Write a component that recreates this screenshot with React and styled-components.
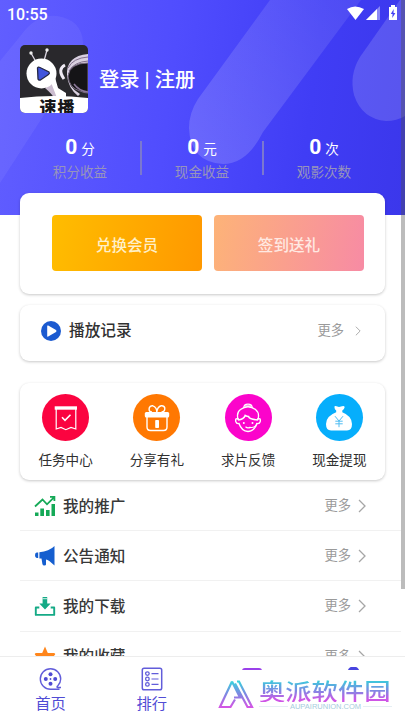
import React from 'react';
import styled, { createGlobalStyle } from 'styled-components';

const stats = [
  { value: '0', unit: '分', label: '积分收益' },
  { value: '0', unit: '元', label: '现金收益' },
  { value: '0', unit: '次', label: '观影次数' },
];

const shortcuts = [
  { label: '任务中心', color: '#fb0440', icon: <TaskIcon /> },
  { label: '分享有礼', color: '#ff7802', icon: <GiftIcon /> },
  { label: '求片反馈', color: '#fb04cb', icon: <FaceIcon /> },
  { label: '现金提现', color: '#06aefc', icon: <PurseIcon /> },
];

const menuItems = [
  { label: '我的推广', icon: <ChartIcon /> },
  { label: '公告通知', icon: <HornIcon /> },
  { label: '我的下载', icon: <DownloadIcon /> },
  { label: '我的收藏', icon: <StarIcon /> },
];

export default function App() {
  return (
    <Screen>
      <GlobalStyle />
      <Content>
        <Header>
          <HeaderPattern />
          <StatusBar>
            <span>10:55</span>
            <StatusIcons />
          </StatusBar>
          <Profile>
            <Avatar>
              <AvatarArt />
              <AvatarName>速播</AvatarName>
            </Avatar>
            <Login>登录 | 注册</Login>
          </Profile>
          <Stats>
            {stats.map(stat => (
              <Stat key={stat.label}>
                <StatValue>
                  <strong>{stat.value}</strong>
                  {stat.unit}
                </StatValue>
                <StatLabel>{stat.label}</StatLabel>
              </Stat>
            ))}
          </Stats>
        </Header>

        <ActionCard>
          <ActionButton $from="#ffbd00" $to="#ff9800" $color="#fff0c8">
            兑换会员
          </ActionButton>
          <ActionButton $from="#fdb378" $to="#f78ba4" $color="#ffe9e2">
            签到送礼
          </ActionButton>
        </ActionCard>

        <HistoryCard>
          <PlayIcon />
          <HistoryTitle>播放记录</HistoryTitle>
          <More $gap="11px">
            更多
            <Chevron width="6" height="10" />
          </More>
        </HistoryCard>

        <ShortcutCard>
          {shortcuts.map(item => (
            <Shortcut key={item.label}>
              <Circle $color={item.color}>{item.icon}</Circle>
              {item.label}
            </Shortcut>
          ))}
        </ShortcutCard>

        <Menu>
          {menuItems.map(item => (
            <MenuRow key={item.label}>
              <MenuIcon>{item.icon}</MenuIcon>
              <MenuTitle>{item.label}</MenuTitle>
              <More $gap="7px">
                更多
                <Chevron width="8" height="14" />
              </More>
            </MenuRow>
          ))}
        </Menu>
      </Content>

      <TabBar>
        <Tab>
          <ReelIcon />
          首页
        </Tab>
        <Tab>
          <RankIcon />
          排行
        </Tab>
        <Tab>
          <svg width="26" height="24" viewBox="0 0 26 24">
            <rect x="2" y="1" width="20" height="20" rx="3" fill="#9a40ea" />
          </svg>
        </Tab>
        <Tab>
          <svg width="26" height="24" viewBox="0 0 26 24">
            <circle cx="12.5" cy="6" r="6.5" fill="#4844df" />
          </svg>
        </Tab>
      </TabBar>

      <Watermark>
        <WatermarkLogo />
        <WatermarkText>
          <WatermarkName>奥派软件园</WatermarkName>
          <WatermarkSite>AUPAIRUNION.COM</WatermarkSite>
        </WatermarkText>
      </Watermark>
      <ScrollThumb />
    </Screen>
  );
}

function HeaderPattern() {
  return (
    <Pattern width="405" height="215" viewBox="0 0 405 215">
      <defs>
        <linearGradient id="band" x1="1" y1="0" x2="0" y2="1">
          <stop offset="0" stopColor="#fff" stopOpacity="0.08" />
          <stop offset="1" stopColor="#fff" stopOpacity="0.17" />
        </linearGradient>
      </defs>
      <path
        d="M270 0H361L263 132Q247 164 223 164Q190 162 189 128Q189 113 198 99Z"
        fill="url(#band)"
      />
      <path
        d="M405 0H400L360 57Q349 75 354 95Q362 119 386 121Q397 121 405 116Z"
        fill="#fff"
        fillOpacity="0.15"
      />
      <path
        d="M0 61L22 34Q37 14 57 16Q82 20 83 43Q82 57 73 70L0 183Z"
        fill="#fff"
        fillOpacity="0.06"
      />
    </Pattern>
  );
}

function StatusIcons() {
  return (
    <svg width="54" height="16" viewBox="0 0 54 16" fill="#fff">
      <path d="M1 4Q9-1 18 4L9.5 15Z" />
      <path d="M20 15L34 1V15Z" fillOpacity="0.4" />
      <path d="M20 15L31 4V15Z" />
      <path d="M45 0H49V2H51V15H43V2H45Z" />
      <path d="M47.7 4L44.8 9H46.6L46.2 13L49.4 8H47.5Z" fill="#4441f5" />
    </svg>
  );
}

function AvatarArt() {
  return (
    <svg width="68" height="53" viewBox="0 0 68 53">
      <path d="M25 43Q32 49 34 53H43Q36 42 35 34Z" fill="#cbbdd0" />
      <path
        d="M47 30Q46 11 68 9V19Q50 18 48 31Q48 42 60 49L58 51Q48 43 47 30Z"
        fill="#d9d0e0"
      />
      <path d="M48 23Q53 13 68 12M49 26Q54 17 68 16" stroke="#81708b" fill="none" />
      <path
        d="M68 18Q50 18 48 31Q49 43 60 46Q64 48 68 48Z"
        fill="#151417"
        stroke="#77697f"
        strokeWidth="1"
      />
      <path d="M54 39Q59 46 68 47" stroke="#8b7898" strokeWidth="1.5" fill="none" />
      <path d="M45 20Q37 24 44 34" stroke="#efeaf3" strokeWidth="3" fill="none" />
      <path d="M11 8L16 17M27 5L24 16" stroke="#d9d3df" strokeWidth="1.3" />
      <circle cx="11" cy="8" r="1.7" fill="#eee" />
      <circle cx="27" cy="5" r="1.7" fill="#eee" />
      <circle cx="21.5" cy="28.5" r="15" fill="#fff" />
      <path
        d="M17.5 23Q18 21.5 20 22.5L29 27Q30 28.5 28.5 29.5L20.5 35Q18.5 35.5 18 34Z"
        fill="#4054dd"
        stroke="#252845"
        strokeWidth="1.3"
      />
      <path d="M32 40V34Q35 30 36 36L38 43L46 48V53H37Z" fill="#fff" />
      <path d="M0 53Q34 49 68 53Z" fill="#fff" />
    </svg>
  );
}

function PlayIcon() {
  return (
    <svg width="20" height="20" viewBox="0 0 20 20">
      <circle cx="10" cy="10" r="10" fill="#1b5ad0" />
      <path
        d="M6.2 5Q6.2 4 7.2 4.6L15 9Q16 10 15 11L7.2 15.4Q6.2 16 6.2 15Z"
        fill="#fff"
      />
    </svg>
  );
}

function Chevron({ width, height }) {
  return (
    <svg width={width} height={height} viewBox="0 0 8 14" fill="none">
      <path d="M1 1L7 7L1 13" stroke="#a6a6a6" strokeWidth="1.3" />
    </svg>
  );
}

function TaskIcon() {
  return (
    <svg width="26" height="26" viewBox="0 0 26 26" fill="none" stroke="#fff">
      <path d="M1.7 3H24" strokeWidth="3.4" />
      <path d="M3.2 4V24L8 22.5L12.8 24.7L18 22.5L22.8 24V4" strokeWidth="1.2" />
      <path d="M9 12.3L12 15.3L17.5 9.8" strokeWidth="1.6" />
    </svg>
  );
}

function GiftIcon() {
  return (
    <svg width="28" height="28" viewBox="0 0 28 28" fill="none" stroke="#fff">
      <path
        d="M9 8Q5.5 8 6.2 4Q7 1.4 9.8 1.8Q13.8 3 13.8 8Q14.5 2.8 18.2 1.8Q21.2 1.5 21.8 4Q22 8 18.5 8"
        strokeWidth="1.4"
      />
      <rect x="1.8" y="8" width="24.4" height="5.5" rx="1.5" fill="#fff" stroke="none" />
      <path d="M4 13V23Q4 26.5 7.5 26.5H20.5Q24 26.5 24 23V13" strokeWidth="1.4" />
      <rect x="12.2" y="16" width="3.8" height="8" rx="0.8" fill="#fff" stroke="none" />
    </svg>
  );
}

function FaceIcon() {
  return (
    <svg width="28" height="30" viewBox="0 0 28 30" fill="none" stroke="#fff">
      <path
        d="M4.2 17Q2 9.5 6.5 6.5Q14 1 21.5 6.5Q26 10 23.8 17"
        strokeWidth="1.3"
      />
      <path d="M9.8 4.8Q9.8 1.2 14 1.2Q18.2 1.2 18.2 4.8" strokeWidth="1.3" />
      <path d="M11 3H17" strokeWidth="1.2" />
      <path
        d="M4 17Q9.7 16.5 11.2 12.5Q13 13.5 14.5 13.5Q15.5 16.5 24 17"
        strokeWidth="1.6"
      />
      <path
        d="M4.8 16Q1 14.5 1.8 18.5Q2.4 21 5 20.5Q7.5 28 14 28.5Q20.5 28 23 20.5Q25.6 21 26.2 18.5Q27 14.5 23.2 16"
        strokeWidth="1.4"
      />
      <path d="M23 20Q22 25 15 24.7" strokeWidth="1.2" />
      <circle cx="9.8" cy="20" r="1" fill="#fff" stroke="none" />
      <circle cx="18.5" cy="20" r="1" fill="#fff" stroke="none" />
      <path d="M11.5 23.8Q14 26 16.5 24" strokeWidth="1.2" />
    </svg>
  );
}

function PurseIcon() {
  return (
    <svg width="28" height="28" viewBox="0 0 28 28">
      <path
        d="M9.5 3.4Q9 1.5 11.5 2.2L14 3L17 2.2Q20 1.2 19.6 3.6Q19 5.8 17.3 6.5V8.2Q27 12 27 20Q27 26.5 22 26.5H6Q1 26.5 1 20Q1 12 11.2 8.2V6.5Q9.5 5.5 9.5 3.4Z"
        fill="#fff"
      />
      <path
        d="M10 12.2L14 17L18 12.2M10.3 17.2H17.7M10.3 19.8H17.7M14 17V23.2"
        fill="none"
        stroke="#50bdf2"
        strokeWidth="1"
      />
    </svg>
  );
}

function ChartIcon() {
  return (
    <svg width="22" height="22" viewBox="0 0 22 22" fill="#15a957">
      <path d="M1 17.5H4.5V21H1ZM6.3 13.5H10V21H6.3ZM12 15H15.6V21H12ZM17.5 9H21V21H17.5Z" />
      <path
        d="M1 11.5L8.5 4.5L13 9.3L19.5 2.8M16 1.8H20.4V6"
        fill="none"
        stroke="#15a957"
        strokeWidth="1.8"
      />
    </svg>
  );
}

function HornIcon() {
  return (
    <svg width="22" height="22" viewBox="0 0 22 22" fill="#155ecf">
      <path d="M4.2 7.6H2.7Q1 7.6 1 10.2Q1 12.9 2.7 12.9H4.2ZM5.4 7.2Q15 6.6 20.5 1V20.5Q15 15 12 14.4V19.5Q12 20.6 10.4 20.6Q8.6 20.6 8.4 19L7.5 13.5H5.4Z" />
    </svg>
  );
}

function DownloadIcon() {
  return (
    <svg width="22" height="22" viewBox="0 0 22 22" fill="#15aa86">
      <path d="M8.6 2H13.2V8.5H16.7L11 14.5L5.3 8.5H8.6Z" />
      <path d="M8.6 3.7H13.2" stroke="#fff" strokeWidth="0.8" />
      <path
        d="M5.3 12.5H1.8V19.9H20.2V12.5H16.7"
        fill="none"
        stroke="#15aa86"
        strokeWidth="1.9"
        strokeLinejoin="round"
      />
    </svg>
  );
}

function StarIcon() {
  return (
    <svg width="22" height="22" viewBox="0 0 22 22" fill="#ff861c">
      <path d="M11 0.5L13.8 7H20Q22.3 7.7 20.3 9.6L15.8 13.5L17.5 20L11 16.5L4.5 20L6.2 13.5L1.7 9.6Q-0.3 7.7 2 7H8.2Z" />
    </svg>
  );
}

function ReelIcon() {
  return (
    <svg width="24" height="24" viewBox="0 0 24 24" fill="#504bd3">
      <path
        d="M20.5 22.2H11.5A10.2 10.2 0 1 1 21.7 12Q21.7 15.5 19 18.5Q17 20.5 19 20.5H22"
        fill="none"
        stroke="#625dda"
        strokeWidth="1.4"
      />
      <circle cx="11.5" cy="7.3" r="2" />
      <circle cx="6.8" cy="12" r="2" />
      <circle cx="16.2" cy="12" r="2" />
      <circle cx="11.5" cy="16.7" r="2" />
      <circle cx="11.5" cy="12" r="0.9" />
    </svg>
  );
}

function RankIcon() {
  return (
    <svg width="24" height="24" viewBox="0 0 24 24" fill="none" stroke="#625dda">
      <rect x="2.3" y="1.3" width="19.4" height="21.4" rx="1.8" strokeWidth="1.5" />
      <circle cx="7.4" cy="6.6" r="1.8" strokeWidth="1.3" />
      <circle cx="7.4" cy="12" r="1.8" strokeWidth="1.3" />
      <circle cx="7.4" cy="17.4" r="1.8" strokeWidth="1.3" />
      <path d="M11.5 6.6H18.5M11.5 12H18.5M11.5 17.4H18.5" strokeWidth="1.2" />
    </svg>
  );
}

function WatermarkLogo() {
  return (
    <svg width="36" height="30" viewBox="0 0 36 30" fill="none">
      <defs>
        <linearGradient id="logo" x1="0" y1="0" x2="0" y2="1">
          <stop offset="0" stopColor="#39d2dd" />
          <stop offset="0.5" stopColor="#7f86e2" />
          <stop offset="1" stopColor="#d356e5" />
        </linearGradient>
      </defs>
      <path
        d="M14 2.5L2 28H12.5L17 20.5M14 2.5L22 18.5H16M19 2.5H21L34 28H29.5L17 4.5"
        stroke="url(#logo)"
        strokeWidth="2.2"
      />
    </svg>
  );
}

const GlobalStyle = createGlobalStyle`
  body {
    margin: 0;
    background: #fff;
    font-family: Roboto, 'Noto Sans CJK SC', sans-serif;
  }

  * {
    box-sizing: border-box;
  }

  svg {
    display: block;
    flex-shrink: 0;
  }
`;

const Screen = styled.div`
  position: relative;
  display: flex;
  flex-direction: column;
  width: 405px;
  height: 720px;
  overflow: hidden;
  background: #fff;
`;

const Content = styled.main`
  height: 656px;
  overflow: hidden;
  flex-shrink: 0;
`;

const Header = styled.header`
  position: relative;
  height: 215px;
  color: #fff;
  background: linear-gradient(97deg, #615eff 0%, #504dfe 42%, #403df5 75%, #3b37eb 100%);
`;

const Pattern = styled.svg`
  position: absolute;
  top: 0;
  left: 0;
`;

const StatusBar = styled.div`
  position: relative;
  display: flex;
  align-items: center;
  justify-content: space-between;
  height: 28px;
  padding: 0 5px 3px 7px;
  font-size: 16px;
  font-weight: 500;
  line-height: 20px;

  span {
    padding-top: 5px;
  }
`;

const Profile = styled.div`
  position: relative;
  display: flex;
  align-items: center;
  height: 68px;
  margin: 17px 20px 0;
`;

const Avatar = styled.div`
  width: 68px;
  height: 68px;
  border-radius: 5px;
  overflow: hidden;
  background: #29282c;
`;

const AvatarName = styled.div`
  height: 15px;
  padding-left: 7px;
  background: #fff;
  color: #171719;
  font-size: 17px;
  font-weight: 900;
  line-height: 20px;
  letter-spacing: 1px;
  text-align: center;
`;

const Login = styled.div`
  margin-left: 11px;
  padding-top: 1px;
  font-size: 20.3px;
  font-weight: 500;
  line-height: 28px;
  white-space: nowrap;
`;

const Stats = styled.div`
  position: relative;
  display: flex;
  width: 366px;
  margin: 23px 0 0 19px;
`;

const Stat = styled.div`
  flex: 1;
  position: relative;
  text-align: center;

  & + &::before {
    content: '';
    position: absolute;
    left: -1px;
    top: 5px;
    width: 2px;
    height: 34px;
    background: #7b78cf;
  }
`;

const StatValue = styled.div`
  height: 24px;
  font-size: 13.6px;
  line-height: 23px;

  strong {
    margin-right: 4px;
    font-size: 21px;
    font-weight: 700;
  }
`;

const StatLabel = styled.div`
  height: 24px;
  color: #9794bb;
  font-size: 13.6px;
  line-height: 25px;
`;

const Card = styled.section`
  position: relative;
  display: flex;
  width: 365px;
  margin-left: 20px;
  border-radius: 9px;
  background: #fff;
  box-shadow: 0 1px 3px rgba(0, 0, 0, 0.22);
`;

const ActionCard = styled(Card)`
  height: 101px;
  margin-top: -22px;
  padding: 22px 21px 23px 32px;
  gap: 12px;
`;

const ActionButton = styled.button`
  flex: 1;
  border: none;
  border-radius: 4px;
  background: linear-gradient(100deg, ${props => props.$from}, ${props => props.$to});
  color: ${props => props.$color};
  font-family: inherit;
  font-size: 15.6px;
  font-weight: 500;
  padding: 1px 0 0;
`;

const HistoryCard = styled(Card)`
  align-items: center;
  height: 56px;
  margin-top: 11px;
  padding: 0 24px 5px 21px;
`;

const HistoryTitle = styled.div`
  margin-left: 8px;
  color: #303030;
  font-size: 15.7px;
  font-weight: 500;
  line-height: 24px;
`;

const More = styled.div`
  display: flex;
  align-items: center;
  gap: ${props => props.$gap};
  margin-left: auto;
  color: #9a9a9a;
  font-size: 13.3px;
  line-height: 20px;
`;

const ShortcutCard = styled(Card)`
  height: 97px;
  margin-top: 22px;
`;

const Shortcut = styled.div`
  display: flex;
  flex: 1;
  flex-direction: column;
  align-items: center;
  padding-top: 11px;
  color: #303030;
  font-size: 13.6px;
  line-height: 20px;
`;

const Circle = styled.div`
  display: flex;
  align-items: center;
  justify-content: center;
  width: 47px;
  height: 47px;
  margin-bottom: 9px;
  border-radius: 50%;
  background: ${props => props.$color};
`;

const Menu = styled.div`
  width: 381px;
  margin-left: 20px;
  padding-top: 1px;
`;

const MenuRow = styled.div`
  display: flex;
  align-items: center;
  height: 50.2px;
  padding: 1px 35px 0 14px;
  border-bottom: 1px solid #f1f1f1;
`;

const MenuIcon = styled.div`
  width: 22px;
  margin-right: 7px;
`;

const MenuTitle = styled.div`
  padding-top: 1px;
  color: #383838;
  font-size: 15.6px;
  font-weight: 500;
  line-height: 24px;
`;

const TabBar = styled.nav`
  display: flex;
  height: 64px;
  border-top: 1px solid #ededed;
  background: #fff;
`;

const Tab = styled.div`
  display: flex;
  flex: 1;
  flex-direction: column;
  align-items: center;
  padding-top: 10px;
  color: #514cd5;
  font-size: 15.3px;
  line-height: 26px;
`;

const Watermark = styled.div`
  position: absolute;
  right: 0;
  bottom: 0;
  display: flex;
  width: 187px;
  height: 50px;
  padding: 9px 0 0;
  background: #fff;
`;

const WatermarkText = styled.div`
  display: flex;
  flex-direction: column;
  margin: -3px 0 0 5px;
  width: 133px;
`;

const WatermarkName = styled.div`
  height: 28px;
  background: linear-gradient(180deg, #35d0db 10%, #7a8ce3 50%, #cf55e6 90%);
  background-clip: text;
  color: transparent;
  font-family: 'Noto Sans CJK SC', sans-serif;
  font-size: 26.3px;
  font-weight: 500;
  line-height: 27px;
  white-space: nowrap;
  transform: scaleY(0.88);
`;

const WatermarkSite = styled.div`
  display: flex;
  align-items: center;
  gap: 2px;
  margin-top: -2px;
  color: #a6cddd;
  font-family: 'Liberation Sans', sans-serif;
  font-size: 7.5px;
  line-height: 9px;

  &::before,
  &::after {
    content: '';
    flex: 1;
    height: 1px;
    background: #e5eef3;
  }
`;

const ScrollThumb = styled.div`
  position: absolute;
  top: 0;
  right: 0;
  width: 4px;
  height: 589px;
  background: rgba(80, 80, 80, 0.38);
`;
